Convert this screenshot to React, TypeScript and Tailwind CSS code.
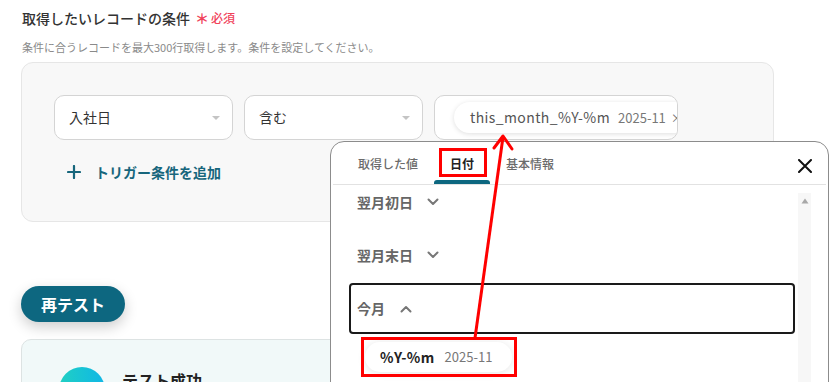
import React from "react";

const FONT = "font-['Noto_Sans_CJK_JP','Noto_Sans',sans-serif]";

function Caret() {
  return (
    <svg width="10" height="6" viewBox="0 0 10 6" className="shrink-0">
      <path d="M1 1h8L5 5z" fill="#c4c4c4" />
    </svg>
  );
}

function Chevron({ up = false }: { up?: boolean }) {
  return (
    <svg width="12" height="8" viewBox="0 0 12 8" className="shrink-0">
      <path
        d={up ? "M1.5 6.5 6 2l4.5 4.5" : "M1.5 1.5 6 6l4.5-4.5"}
        fill="none"
        stroke="#777"
        strokeWidth="2"
        strokeLinecap="round"
        strokeLinejoin="round"
      />
    </svg>
  );
}

function SelectBox({ label, width }: { label: string; width: string }) {
  return (
    <div
      className={`${width} h-[45px] flex items-center justify-between pl-[14px] pr-[11px] bg-white border border-[#d4d4d4] rounded-[10px]`}
    >
      <span className="text-[14px] text-[#333]">{label}</span>
      <Caret />
    </div>
  );
}

export default function App() {
  return (
    <div className={`relative w-[838px] h-[382px] overflow-hidden bg-white ${FONT}`}>
      {/* main column */}
      <div className="pl-[21px] pt-[8px] w-[774px]">
        <div className="flex items-center h-5 leading-5">
          <span className="pl-px text-[14px] font-medium text-[#333]">取得したいレコードの条件</span>
          <span className="ml-[5px] text-[14px] font-bold text-[#f0425a]">＊</span>
          <span className="ml-[2px] text-[12px] font-medium text-[#f0425a]">必須</span>
        </div>
        <p className="mt-[11px] pl-px text-[11px] leading-4 text-[#8a8a8a]">
          条件に合うレコードを最大300行取得します。条件を設定してください。
        </p>

        <div className="mt-[7px] h-[160px] rounded-[12px] border border-[#e6e6e6] bg-[#f8f8f8] pt-[32px] pl-[32px]">
          <div className="flex gap-[11px]">
            <SelectBox label="入社日" width="w-[179px]" />
            <SelectBox label="含む" width="w-[179px]" />
            <div className="w-[244px] h-[45px] flex items-center pl-[19px] bg-white border border-[#d4d4d4] rounded-[10px] overflow-hidden">
              <div className="flex items-center h-[31px] pl-[16px] pr-[8px] rounded-full bg-white shadow-[0_1px_5px_rgba(0,0,0,0.13)] whitespace-nowrap">
                <span className="text-[14px] text-[#555] tracking-[0.4px]">this_month_%Y-%m</span>
                <span className="ml-[8px] text-[13px] text-[#777]">2025-11</span>
                <span className="ml-[5px] text-[12px] text-[#777]">×</span>
              </div>
            </div>
          </div>
          <div className="mt-[22px] pl-[13px] flex items-center h-5">
            <svg width="14" height="14" viewBox="0 0 14 14">
              <path d="M7 1v12M1 7h12" stroke="#17667c" strokeWidth="2.2" strokeLinecap="round" />
            </svg>
            <span className="ml-[14px] text-[14px] font-bold text-[#17667c]">トリガー条件を追加</span>
          </div>
        </div>

        <button className="mt-[64px] w-[104px] h-[36px] rounded-full bg-[#0d6780] text-white text-[16px] font-bold shadow-[0_5px_14px_rgba(0,0,0,0.2)]">
          再テスト
        </button>

        <div className="mt-[17px] h-[60px] rounded-t-[10px] border border-[#dde3e3] bg-[#f1f9f9] pl-[37px] pt-[27px] flex gap-[17px]">
          <div className="w-[46px] h-[46px] rounded-full bg-gradient-to-r from-[#22d0c2] to-[#12b6e6]" />
          <span className="text-[16px] font-bold text-[#222] leading-[22px] mt-[2px]">テスト成功</span>
        </div>
      </div>

      {/* dropdown panel */}
      <div className="absolute left-[330px] top-[141px] w-[499px] h-[260px] rounded-t-[14px] border border-[#8c8c8c] bg-white">
        <div className="relative flex h-[42px] pl-[11px]">
          <div className="px-[16px] flex items-center pt-[2px] text-[12px] font-medium text-[#6b6b6b]">取得した値</div>
          <div className="relative px-[16px] flex items-center pt-[2px] text-[12px] font-bold text-[#222]">
            日付
            <span className="absolute left-0 right-0 bottom-0 h-[4px] rounded-t-[3px] bg-[#0d6780]" />
          </div>
          <div className="px-[16px] flex items-center pt-[2px] text-[12px] font-medium text-[#6b6b6b]">基本情報</div>
          <svg className="absolute right-[16px] top-[17px]" width="14" height="14" viewBox="0 0 14 14">
            <path d="M1 1l12 12M13 1 1 13" stroke="#111" strokeWidth="2" strokeLinecap="round" />
          </svg>
        </div>
        <div className="mx-[2px] h-px bg-[#e2e2e2]" />

        <div className="flex h-[200px] overflow-hidden pl-[18px] pr-[17px]">
          <div className="flex-1 flex flex-col gap-[3px] -mt-[8px]">
            <div className="h-[50px] shrink-0 flex items-center gap-[14px] pl-[6px] border-2 border-transparent">
              <span className="text-[14px] font-semibold text-[#666]">翌月初日</span>
              <Chevron />
            </div>
            <div className="h-[50px] shrink-0 flex items-center gap-[14px] pl-[6px] border-2 border-transparent">
              <span className="text-[14px] font-semibold text-[#666]">翌月末日</span>
              <Chevron />
            </div>
            <div className="h-[51px] shrink-0 flex items-center gap-[15px] pl-[6px] border-2 border-[#1a1a1a] rounded-[4px]">
              <span className="text-[14px] font-semibold text-[#666]">今月</span>
              <Chevron up />
            </div>
            <div className="pl-[16px] pt-[5px]">
              <div className="inline-flex items-center h-[30px] pl-[15px] pr-[20px] rounded-full bg-white shadow-[0_1px_8px_rgba(0,0,0,0.1)]">
                <span className="text-[14px] font-bold text-[#222] tracking-[0.4px]">%Y-%m</span>
                <span className="ml-[10px] text-[13px] text-[#777]">2025-11</span>
              </div>
            </div>
          </div>
          <div className="ml-[3px] w-[13px] mt-[8px] bg-[#f7f7f7] flex justify-center pt-[5px]">
            <svg width="8" height="6" viewBox="0 0 8 6">
              <path d="M4 0.5 7.5 5.5h-7z" fill="#a8a8a8" />
            </svg>
          </div>
        </div>
      </div>

      {/* annotations */}
      <div className="absolute left-[439px] top-[148px] w-[48px] h-[29px] border-[3px] border-[#ff0000]" />
      <div className="absolute left-[361px] top-[337px] w-[156px] h-[40px] border-[3px] border-[#ff0000]" />
      <svg className="absolute left-0 top-0 pointer-events-none" width="838" height="382" viewBox="0 0 838 382">
        <path d="M475 338 503 137" stroke="#ff0000" strokeWidth="3" fill="none" />
        <path d="M494 148 503 136 512 149" stroke="#ff0000" strokeWidth="3" fill="none" strokeLinecap="round" strokeLinejoin="round" />
      </svg>
    </div>
  );
}
